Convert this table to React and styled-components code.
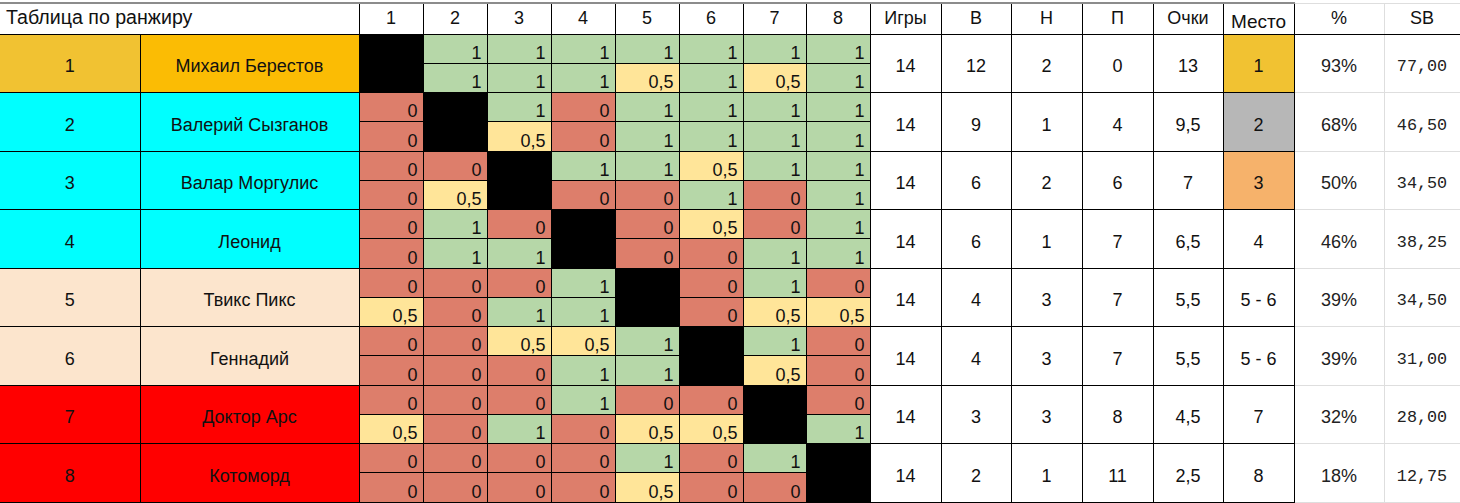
import React from "react";
import styled, { createGlobalStyle } from "styled-components";

const GlobalStyle = createGlobalStyle`
  html, body {
    margin: 0;
    padding: 0;
    background: #fff;
  }
  body {
    font-family: "Liberation Sans", Arial, sans-serif;
    color: #111;
    overflow: hidden;
  }
`;

const colors = {
  win: "#b6d7a8",
  loss: "#dd7e6b",
  draw: "#ffe599",
  gold: "#f1c232",
  amber: "#fbbc04",
  cyan: "#00ffff",
  peach: "#fce5cd",
  red: "#ff0000",
  silver: "#b7b7b7",
  bronze: "#f6b26b",
};

const Page = styled.div`
  padding-top: 2px;
  width: 1460px;
`;

const Sheet = styled.table`
  width: 1460px;
  table-layout: fixed;
  border-collapse: collapse;
  font-size: 18px;
`;

const HeadRow = styled.tr`
  height: 31px;
`;

const SubRow = styled.tr`
  height: 29.25px;
`;

const HeadCell = styled.th`
  font-weight: 400;
  font-size: ${p => p.$size || "18px"};
  text-align: ${p => p.$left ? "left" : "center"};
  vertical-align: bottom;
  padding: 0 0 ${p => p.$low ? "1px" : "5px"} ${p => p.$left ? "6px" : "0"};
  border-top: ${p => p.$light ? "1px solid #dedede" : "2px solid #8c8c8c"};
  border-left: ${p => p.$left ? "0 none" : `1px solid ${p.$light ? "#dedede" : "#000"}`};
  border-right: 1px solid ${p => p.$light ? "#dedede" : "#000"};
  border-bottom: 1px solid #000;
  white-space: nowrap;
  overflow: hidden;
`;

const LabelCell = styled.td`
  background: ${p => p.$bg};
  border: 1px solid #000;
  border-left: ${p => p.$first ? "0 none" : "1px solid #000"};
  text-align: center;
  vertical-align: middle;
  padding: 7px 0 0;
  white-space: nowrap;
`;

const ScoreCell = styled.td`
  background: ${p => p.$v === 1 ? colors.win : p.$v === 0 ? colors.loss : colors.draw};
  border: 1px solid #000;
  text-align: right;
  vertical-align: bottom;
  padding: 0 5px 0 0;
  line-height: 20px;
`;

const SelfCell = styled.td`
  background: #000;
  border: 1px solid #000;
  padding: 0;
`;

const StatCell = styled.td`
  background: ${p => p.$bg || "#fff"};
  border: 1px solid #000;
  text-align: center;
  vertical-align: middle;
  padding: 7px 0 0;
  white-space: nowrap;
`;

const ExtraCell = styled.td`
  border: 1px solid #dedede;
  text-align: center;
  vertical-align: middle;
  padding: 7px 0 0;
  color: #222;
  font-family: ${p => p.$mono ? '"Liberation Mono", "DejaVu Sans Mono", monospace' : "inherit"};
  font-size: ${p => p.$mono ? "16.8px" : "inherit"};
  white-space: nowrap;
`;

const players = [
  { rank: 1, name: "Михаил Берестов", rankBg: colors.gold, nameBg: colors.amber,
    top: [null, 1, 1, 1, 1, 1, 1, 1], bottom: [null, 1, 1, 1, 0.5, 1, 0.5, 1],
    stats: ["14", "12", "2", "0", "13"], place: "1", placeBg: colors.gold, pct: "93%", sb: "77,00" },
  { rank: 2, name: "Валерий Сызганов", rankBg: colors.cyan, nameBg: colors.cyan,
    top: [0, null, 1, 0, 1, 1, 1, 1], bottom: [0, null, 0.5, 0, 1, 1, 1, 1],
    stats: ["14", "9", "1", "4", "9,5"], place: "2", placeBg: colors.silver, pct: "68%", sb: "46,50" },
  { rank: 3, name: "Валар Моргулис", rankBg: colors.cyan, nameBg: colors.cyan,
    top: [0, 0, null, 1, 1, 0.5, 1, 1], bottom: [0, 0.5, null, 0, 0, 1, 0, 1],
    stats: ["14", "6", "2", "6", "7"], place: "3", placeBg: colors.bronze, pct: "50%", sb: "34,50" },
  { rank: 4, name: "Леонид", rankBg: colors.cyan, nameBg: colors.cyan,
    top: [0, 1, 0, null, 0, 0.5, 0, 1], bottom: [0, 1, 1, null, 0, 0, 1, 1],
    stats: ["14", "6", "1", "7", "6,5"], place: "4", pct: "46%", sb: "38,25" },
  { rank: 5, name: "Твикс Пикс", rankBg: colors.peach, nameBg: colors.peach,
    top: [0, 0, 0, 1, null, 0, 1, 0], bottom: [0.5, 0, 1, 1, null, 0, 0.5, 0.5],
    stats: ["14", "4", "3", "7", "5,5"], place: "5 - 6", pct: "39%", sb: "34,50" },
  { rank: 6, name: "Геннадий", rankBg: colors.peach, nameBg: colors.peach,
    top: [0, 0, 0.5, 0.5, 1, null, 1, 0], bottom: [0, 0, 0, 1, 1, null, 0.5, 0],
    stats: ["14", "4", "3", "7", "5,5"], place: "5 - 6", pct: "39%", sb: "31,00" },
  { rank: 7, name: "Доктор Арс", rankBg: colors.red, nameBg: colors.red,
    top: [0, 0, 0, 1, 0, 0, null, 0], bottom: [0.5, 0, 1, 0, 0.5, 0.5, null, 1],
    stats: ["14", "3", "3", "8", "4,5"], place: "7", pct: "32%", sb: "28,00" },
  { rank: 8, name: "Котоморд", rankBg: colors.red, nameBg: colors.red,
    top: [0, 0, 0, 0, 1, 0, 1, null], bottom: [0, 0, 0, 0, 0.5, 0, 0, null],
    stats: ["14", "2", "1", "11", "2,5"], place: "8", pct: "18%", sb: "12,75" },
];

const widths = [140, 219, 64, 64, 64, 64, 64, 64, 63, 64, 71, 70, 71, 71, 70, 71, 90, 76];
const fmt = v => (v === 0.5 ? "0,5" : String(v));

const PlayerRows = ({ p }) => (
  <>
    <SubRow>
      <LabelCell rowSpan={2} $bg={p.rankBg} $first>{p.rank}</LabelCell>
      <LabelCell rowSpan={2} $bg={p.nameBg}>{p.name}</LabelCell>
      {p.top.map((v, i) =>
        v === null
          ? <SelfCell key={i} rowSpan={2} />
          : <ScoreCell key={i} $v={v}>{fmt(v)}</ScoreCell>
      )}
      {p.stats.map((s, i) => <StatCell key={"s" + i} rowSpan={2}>{s}</StatCell>)}
      <StatCell rowSpan={2} $bg={p.placeBg}>{p.place}</StatCell>
      <ExtraCell rowSpan={2}>{p.pct}</ExtraCell>
      <ExtraCell rowSpan={2} $mono>{p.sb}</ExtraCell>
    </SubRow>
    <SubRow>
      {p.bottom.map((v, i) =>
        v === null ? null : <ScoreCell key={i} $v={v}>{fmt(v)}</ScoreCell>
      )}
    </SubRow>
  </>
);

export default function App() {
  return (
    <Page>
      <GlobalStyle />
      <Sheet>
        <colgroup>
          {widths.map((w, i) => <col key={i} style={{ width: w }} />)}
        </colgroup>
        <thead>
          <HeadRow>
            <HeadCell colSpan={2} $left $size="19.6px">Таблица по ранжиру</HeadCell>
            {[1, 2, 3, 4, 5, 6, 7, 8].map(n => <HeadCell key={n}>{n}</HeadCell>)}
            <HeadCell>Игры</HeadCell>
            <HeadCell>В</HeadCell>
            <HeadCell>Н</HeadCell>
            <HeadCell>П</HeadCell>
            <HeadCell>Очки</HeadCell>
            <HeadCell $low $size="19px">Место</HeadCell>
            <HeadCell $light>%</HeadCell>
            <HeadCell $light>SB</HeadCell>
          </HeadRow>
        </thead>
        <tbody>
          {players.map(p => <PlayerRows key={p.rank} p={p} />)}
        </tbody>
      </Sheet>
    </Page>
  );
}
